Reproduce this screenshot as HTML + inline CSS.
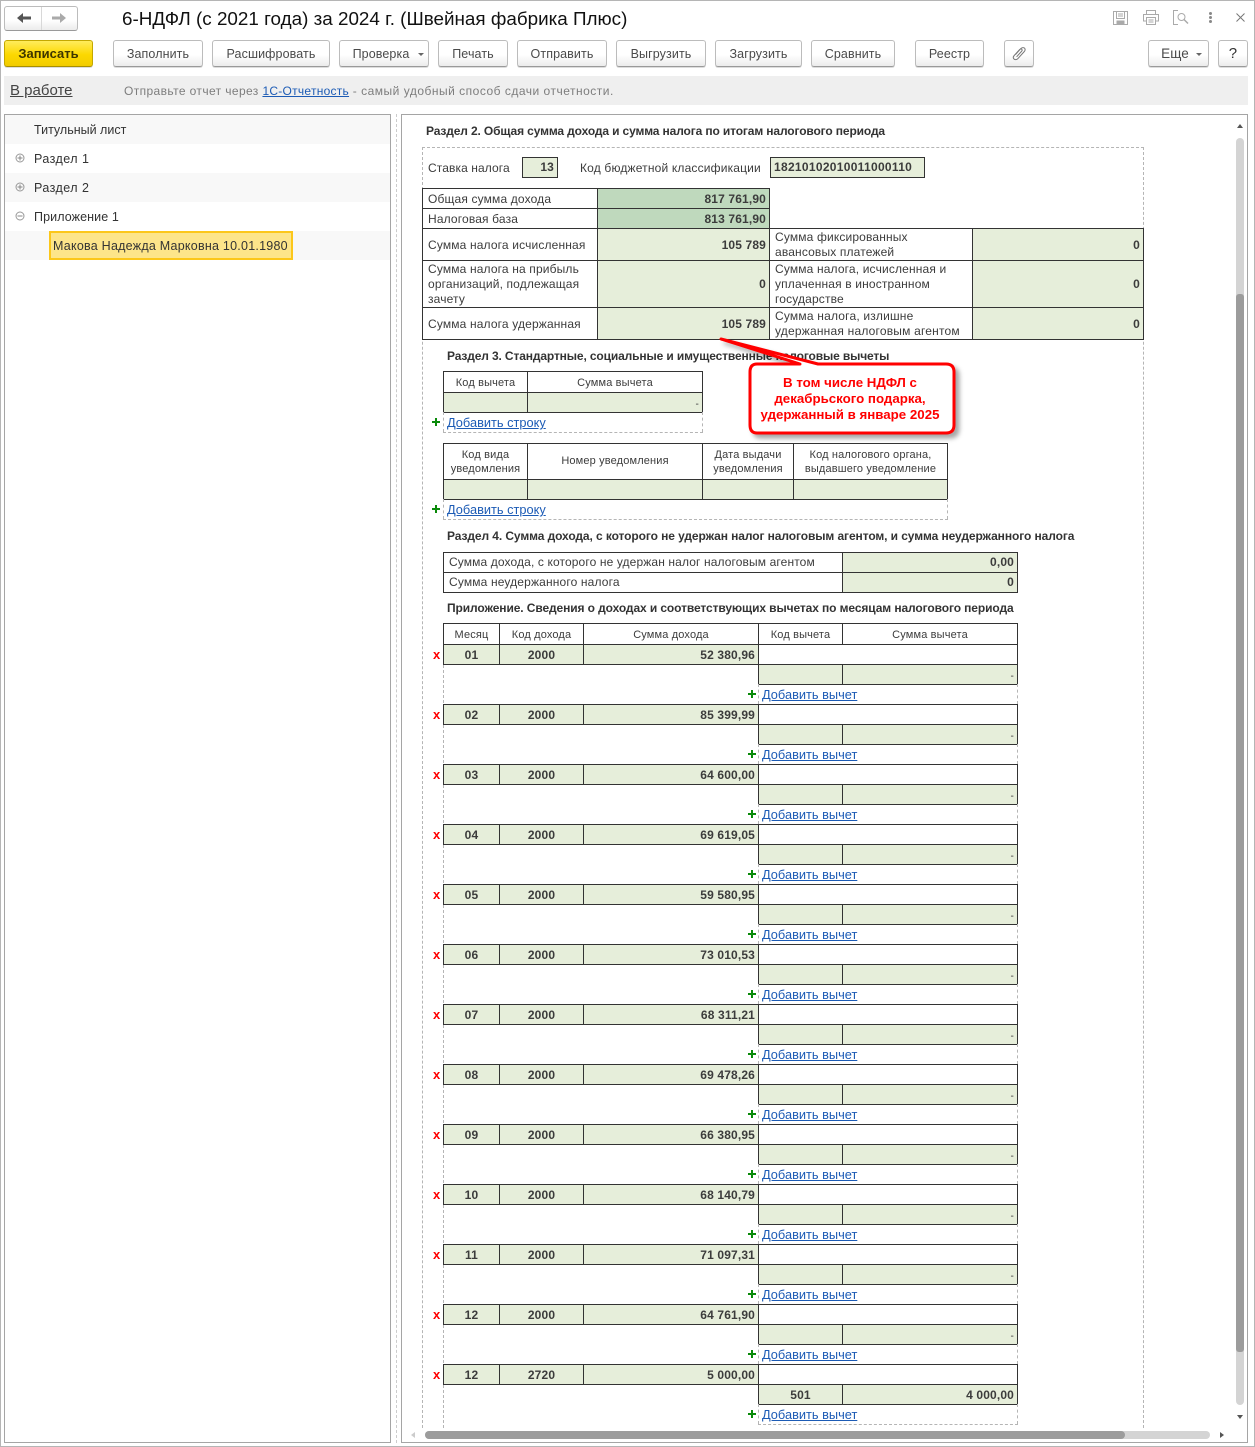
<!DOCTYPE html>
<html lang="ru"><head><meta charset="utf-8"><title>6-НДФЛ</title>
<style>
html,body{margin:0;padding:0;background:#fff}
#p{position:relative;width:1255px;height:1447px;overflow:hidden;background:#fff;font-family:"Liberation Sans",Arial,sans-serif;font-size:12px;color:#333}
#p div,#p a,#p svg{position:absolute;box-sizing:border-box}
.o{white-space:nowrap}
.bt{top:40px;height:27px;border:1px solid #bcbcbc;border-bottom-color:#9a9a9a;border-radius:3px;background:linear-gradient(#fff,#fff 55%,#ececec);text-align:center;line-height:26px;font-size:12.5px;letter-spacing:.1px;color:#4a4a4a;white-space:nowrap;box-shadow:0 1px 0 #ddd}
.t{left:5px;width:385px;height:29px;line-height:29px;padding:1px 0 0 29px;font-size:12.5px;color:#333;letter-spacing:.1px;white-space:nowrap}
.alt{background:#f8f8f8}
.h{font-weight:bold;font-size:12px;letter-spacing:-.11px;white-space:nowrap;color:#333;line-height:14px}
.c{border:1px solid #333;background:#fff;line-height:13.5px;font-size:12px;letter-spacing:.15px;color:#3c3c3c;padding:2px 5px 0;display:flex;align-items:center;white-space:nowrap}
.g{background:#e6eeda}
.d{background:#bfd9bd}
.b{font-weight:bold}
.r{justify-content:flex-end;padding:2px 3px 0 0}
.ct{justify-content:center;text-align:center;padding:0;font-size:11px}
.s{padding-top:4px}
.ml{padding-top:0;line-height:15px}
.up{padding-top:1px}
.n{font-size:12px;justify-content:center;padding:2px 0 0;font-weight:bold}
.l{color:#1c5bb5;text-decoration:underline;font-size:12.8px;line-height:14px;white-space:nowrap}
.v{width:0;border-left:1px dashed #b5b5b5}
.hz{height:0;border-top:1px dashed #b5b5b5}
.pl{width:8px;height:8px;background:linear-gradient(#0a8a0a,#0a8a0a) center/8px 2px no-repeat,linear-gradient(#0a8a0a,#0a8a0a) center/2px 8px no-repeat}
.x{left:433px;color:#f00;font-weight:bold;font-size:13px;line-height:14px}
.m{left:0;width:0;height:0}
.k1{left:443px;top:0;width:57px;height:21px}
.k2{left:499px;top:0;width:85px;height:21px}
.k3{left:583px;top:0;width:176px;height:21px}
.k4{left:758px;top:0;width:260px;height:21px}
.k5{left:758px;top:20px;width:85px;height:21px}
.k6{left:842px;top:20px;width:176px;height:21px}
.ds{font-size:10px;padding-top:5px}
.m .x{top:4px}
.m .pl{left:748px;top:46px}
.m .l{left:762px;top:44px}
.m .v1{left:758px;top:40px;height:20px}
.m .v2{left:1017px;top:40px;height:20px}
</style></head><body><div id="p">
<div style="left:0;top:0;width:1255px;height:1447px;border:1px solid #b5b5b5"></div>

<div style="left:4px;top:6px;width:74px;height:25px;border:1px solid #bcbcbc;border-bottom-color:#9a9a9a;border-radius:3px;background:linear-gradient(#fff,#fff 55%,#ececec)"></div>
<div style="left:41px;top:7px;width:1px;height:23px;background:#d8d8d8"></div>
<svg style="left:16px;top:12px" width="16" height="12" viewBox="0 0 16 12"><path d="M1 6 L7 1 V4.5 H15 V7.5 H7 V11 Z" fill="#555"/></svg>
<svg style="left:51px;top:12px" width="16" height="12" viewBox="0 0 16 12"><path d="M15 6 L9 1 V4.5 H1 V7.5 H9 V11 Z" fill="#aaa"/></svg>
<div class="o" style="left:122px;top:8px;font-size:18.85px;line-height:21px;color:#111">6-НДФЛ (с 2021 года) за 2024 г. (Швейная фабрика Плюс)</div>

<svg style="left:1113px;top:11px" width="15" height="14" viewBox="0 0 15 14"><path d="M.5.5H14.5V13.5H.5Z M3.5.5V7.5H11.5V.5 M5 3H10 M5 5H10 M4 13.5V10H11V13.5" fill="none" stroke="#aaa"/><rect x="4" y="10" width="7" height="3.500" fill="#aaa"/></svg>
<svg style="left:1143px;top:10px" width="16" height="15" viewBox="0 0 16 15"><path d="M3.5 4V.5H12.5V4 M3.5 11H.5V4.5H15.5V11H12.5 M3.5 7.5H12.5V14.5H3.5Z M5.5 10H10.5 M5.5 12H10.5" fill="none" stroke="#aaa"/></svg>
<svg style="left:1173px;top:10px" width="16" height="15" viewBox="0 0 16 15"><path d="M5 .5H.5V14.5H5" fill="none" stroke="#aaa"/><circle cx="8.500" cy="7" r="3.500" fill="none" stroke="#aaa"/><path d="M11 9.5L15 13.5" stroke="#aaa" stroke-width="1.5"/></svg>
<div style="left:1209px;top:12px;width:3px;height:3px;background:#888;border-radius:50%"></div>
<div style="left:1209px;top:16px;width:3px;height:3px;background:#888;border-radius:50%"></div>
<div style="left:1209px;top:20px;width:3px;height:3px;background:#888;border-radius:50%"></div>
<svg style="left:1236px;top:13px" width="9" height="9" viewBox="0 0 9 9"><path d="M.5.5L8.5 8.5M8.5.5L.5 8.5" stroke="#777"/></svg>

<div class="bt b" style="left:4px;width:89px;background:linear-gradient(#ffec5c,#fcd800 55%,#f2cc00);border-color:#c4a800;border-bottom-color:#a88f00;color:#3d3500;font-size:13px;letter-spacing:0;font-weight:bold">Записать</div>
<div class="bt" style="left:113px;width:90px">Заполнить</div>
<div class="bt" style="left:212px;width:118px">Расшифровать</div>
<div class="bt" style="left:339px;width:90px;padding-right:6px">Проверка</div>
<div style="left:418px;top:53px;width:0;height:0;border:3px solid transparent;border-top:3px solid #666;border-bottom:0"></div>
<div class="bt" style="left:438px;width:70px">Печать</div>
<div class="bt" style="left:517px;width:90px">Отправить</div>
<div class="bt" style="left:616px;width:90px">Выгрузить</div>
<div class="bt" style="left:715px;width:87px">Загрузить</div>
<div class="bt" style="left:811px;width:84px">Сравнить</div>
<div class="bt" style="left:915px;width:69px">Реестр</div>
<div class="bt" style="left:1004px;width:30px"></div>
<svg style="left:1012px;top:46px" width="14" height="15" viewBox="0 0 14 15"><path d="M3.5 8.5L8.8 2.6C10 1.3 11.9 1.3 12.6 2.2C13.4 3.2 13.1 4.7 12 5.9L5.8 12.7C4.7 13.9 3 14 2 13C1 12 1.2 10.600 2.200 9.500L7.600 3.600C8.300 2.900 9.300 2.800 9.800 3.300C10.300 3.800 10.200 4.700 9.500 5.400L4.600 10.800" fill="none" stroke="#777"/></svg>
<div class="bt" style="left:1148px;width:61px;padding-right:7px;font-size:13.500px">Еще</div>
<div style="left:1196px;top:53px;width:0;height:0;border:3px solid transparent;border-top:3px solid #666;border-bottom:0"></div>
<div class="bt" style="left:1218px;width:30px;font-size:15px;color:#333">?</div>

<div style="left:4px;top:76px;width:1244px;height:29px;background:#efefef"></div>
<div class="o" style="left:10px;top:82px;font-size:15px;line-height:17px;color:#444;text-decoration:underline">В работе</div>
<div class="o" style="left:124px;top:84px;font-size:12px;line-height:15px;color:#7d7d7d;letter-spacing:.39px">Отправьте отчет через <span style="color:#1c5bb5;text-decoration:underline;letter-spacing:.26px">1С-Отчетность</span> <span style="letter-spacing:.5px">- самый удобный способ сдачи отчетности.</span></div>

<div style="left:4px;top:114px;width:387px;height:1329px;border:1px solid #a5a5a5"></div>
<div class="t alt" style="top:115px;letter-spacing:0">Титульный лист</div>
<div class="t" style="top:144px;letter-spacing:.45px">Раздел 1</div>
<div class="t alt" style="top:173px;letter-spacing:.45px">Раздел 2</div>
<div class="t" style="top:202px">Приложение 1</div>
<div class="t alt" style="top:231px"></div>
<svg style="left:15px;top:153px" width="10" height="10" viewBox="0 0 10 10"><circle cx="5" cy="5" r="4" fill="none" stroke="#999"/><path d="M2.500 5H7.500M5 2.500V7.500" stroke="#888"/></svg>
<svg style="left:15px;top:182px" width="10" height="10" viewBox="0 0 10 10"><circle cx="5" cy="5" r="4" fill="none" stroke="#999"/><path d="M2.500 5H7.500M5 2.500V7.500" stroke="#888"/></svg>
<svg style="left:15px;top:211px" width="10" height="10" viewBox="0 0 10 10"><circle cx="5" cy="5" r="4" fill="none" stroke="#999"/><path d="M2.500 5H7.500" stroke="#888"/></svg>
<div class="o" style="left:49px;top:231px;width:244px;height:29px;background:#fde58a;border:2px solid #fcc71a;line-height:27px;padding-left:2px;font-size:12.5px;color:#333;letter-spacing:.24px">Макова Надежда Марковна 10.01.1980</div>
<div class="v" style="left:396px;top:114px;height:1329px;border-left-color:#ccc"></div>

<div style="left:401px;top:114px;width:847px;height:1329px;border:1px solid #a5a5a5"></div>
<div class="h" style="left:426px;top:124px;letter-spacing:-.13px">Раздел 2. Общая сумма дохода и сумма налога по итогам налогового периода</div>
<div class="hz" style="left:422px;top:147px;width:722px"></div>
<div class="v" style="left:422px;top:147px;height:1281px"></div>
<div class="v" style="left:1143px;top:147px;height:1281px"></div>

<div class="o" style="left:428px;top:161px;line-height:14px;color:#3c3c3c;letter-spacing:.1px">Ставка налога</div>
<div class="c g b r up" style="left:522px;top:157px;width:36px;height:21px">13</div>
<div class="o" style="left:580px;top:161px;line-height:14px;color:#3c3c3c;letter-spacing:.17px">Код бюджетной классификации</div>
<div class="c g b up" style="left:770px;top:157px;width:155px;height:21px;padding-left:3px;letter-spacing:.3px">18210102010011000110</div>

<div class="c" style="left:422px;top:188px;width:176px;height:21px">Общая сумма дохода</div>
<div class="c d b r" style="left:597px;top:188px;width:173px;height:21px">817 761,90</div>
<div class="c" style="left:422px;top:208px;width:176px;height:21px">Налоговая база</div>
<div class="c d b r" style="left:597px;top:208px;width:173px;height:21px">813 761,90</div>
<div class="c" style="left:422px;top:228px;width:176px;height:33px">Сумма налога исчисленная</div>
<div class="c g b r" style="left:597px;top:228px;width:173px;height:33px">105 789</div>
<div class="c ml" style="left:769px;top:228px;width:204px;height:33px">Сумма фиксированных<br>авансовых платежей</div>
<div class="c g b r" style="left:972px;top:228px;width:172px;height:33px">0</div>
<div class="c ml" style="left:422px;top:260px;width:176px;height:48px">Сумма налога на прибыль<br>организаций, подлежащая<br>зачету</div>
<div class="c g b r up" style="left:597px;top:260px;width:173px;height:48px">0</div>
<div class="c ml" style="left:769px;top:260px;width:204px;height:48px">Сумма налога, исчисленная и<br>уплаченная в иностранном<br>государстве</div>
<div class="c g b r up" style="left:972px;top:260px;width:172px;height:48px">0</div>
<div class="c" style="left:422px;top:307px;width:176px;height:33px">Сумма налога удержанная</div>
<div class="c g b r" style="left:597px;top:307px;width:173px;height:33px">105 789</div>
<div class="c ml" style="left:769px;top:307px;width:204px;height:33px;letter-spacing:.2px">Сумма налога, излишне<br>удержанная налоговым агентом</div>
<div class="c g b r" style="left:972px;top:307px;width:172px;height:33px">0</div>

<div class="h" style="left:447px;top:349px;letter-spacing:-.13px">Раздел 3. Стандартные, социальные и имущественные налоговые вычеты</div>
<div class="c ct s" style="left:443px;top:371px;width:85px;height:22px">Код вычета</div>
<div class="c ct s" style="left:527px;top:371px;width:176px;height:22px">Сумма вычета</div>
<div class="c g" style="left:443px;top:392px;width:85px;height:21px"></div>
<div class="c g r ds" style="left:527px;top:392px;width:176px;height:21px">-</div>
<div class="v" style="left:443px;top:412px;height:20px"></div>
<div class="v" style="left:702px;top:412px;height:20px"></div>
<div class="hz" style="left:443px;top:432px;width:260px"></div>
<div class="pl" style="left:432px;top:418px"></div>
<div class="l" style="left:447px;top:416px">Добавить строку</div>

<div class="c ct" style="left:443px;top:443px;width:85px;height:37px;line-height:14px">Код вида<br>уведомления</div>
<div class="c ct" style="left:527px;top:443px;width:176px;height:37px;padding-top:1px">Номер уведомления</div>
<div class="c ct" style="left:702px;top:443px;width:92px;height:37px;line-height:14px">Дата выдачи<br>уведомления</div>
<div class="c ct" style="left:793px;top:443px;width:155px;height:37px;line-height:14px">Код налогового органа,<br>выдавшего уведомление</div>
<div class="c g" style="left:443px;top:479px;width:85px;height:21px"></div>
<div class="c g" style="left:527px;top:479px;width:176px;height:21px"></div>
<div class="c g" style="left:702px;top:479px;width:92px;height:21px"></div>
<div class="c g" style="left:793px;top:479px;width:155px;height:21px"></div>
<div class="v" style="left:443px;top:499px;height:20px"></div>
<div class="v" style="left:947px;top:499px;height:20px"></div>
<div class="hz" style="left:443px;top:519px;width:505px"></div>
<div class="pl" style="left:432px;top:505px"></div>
<div class="l" style="left:447px;top:503px">Добавить строку</div>

<div class="h" style="left:447px;top:529px;letter-spacing:-.09px">Раздел 4. Сумма дохода, с которого не удержан налог налоговым агентом, и сумма неудержанного налога</div>
<div class="c up" style="left:443px;top:552px;width:400px;height:21px;letter-spacing:.12px">Сумма дохода, с которого не удержан налог налоговым агентом</div>
<div class="c g b r up" style="left:842px;top:552px;width:176px;height:21px">0,00</div>
<div class="c up" style="left:443px;top:572px;width:400px;height:21px">Сумма неудержанного налога</div>
<div class="c g b r up" style="left:842px;top:572px;width:176px;height:21px">0</div>

<div class="h" style="left:447px;top:601px;letter-spacing:-.1px">Приложение. Сведения о доходах и соответствующих вычетах по месяцам налогового периода</div>
<div class="c ct s" style="left:443px;top:623px;width:57px;height:22px">Месяц</div>
<div class="c ct s" style="left:499px;top:623px;width:85px;height:22px">Код дохода</div>
<div class="c ct s" style="left:583px;top:623px;width:176px;height:22px">Сумма дохода</div>
<div class="c ct s" style="left:758px;top:623px;width:85px;height:22px">Код вычета</div>
<div class="c ct s" style="left:842px;top:623px;width:176px;height:22px">Сумма вычета</div>
<div class="v" style="left:443px;top:645px;height:783px"></div>

<div class="m" style="top:644px"><div class="x">x</div><div class="c g n k1">01</div><div class="c g n k2">2000</div><div class="c g b r k3">52 380,96</div><div class="c k4"></div><div class="c g k5"></div><div class="c g r ds k6">-</div><div class="v v1"></div><div class="v v2"></div><div class="pl"></div><div class="l">Добавить вычет</div></div>
<div class="m" style="top:704px"><div class="x">x</div><div class="c g n k1">02</div><div class="c g n k2">2000</div><div class="c g b r k3">85 399,99</div><div class="c k4"></div><div class="c g k5"></div><div class="c g r ds k6">-</div><div class="v v1"></div><div class="v v2"></div><div class="pl"></div><div class="l">Добавить вычет</div></div>
<div class="m" style="top:764px"><div class="x">x</div><div class="c g n k1">03</div><div class="c g n k2">2000</div><div class="c g b r k3">64 600,00</div><div class="c k4"></div><div class="c g k5"></div><div class="c g r ds k6">-</div><div class="v v1"></div><div class="v v2"></div><div class="pl"></div><div class="l">Добавить вычет</div></div>
<div class="m" style="top:824px"><div class="x">x</div><div class="c g n k1">04</div><div class="c g n k2">2000</div><div class="c g b r k3">69 619,05</div><div class="c k4"></div><div class="c g k5"></div><div class="c g r ds k6">-</div><div class="v v1"></div><div class="v v2"></div><div class="pl"></div><div class="l">Добавить вычет</div></div>
<div class="m" style="top:884px"><div class="x">x</div><div class="c g n k1">05</div><div class="c g n k2">2000</div><div class="c g b r k3">59 580,95</div><div class="c k4"></div><div class="c g k5"></div><div class="c g r ds k6">-</div><div class="v v1"></div><div class="v v2"></div><div class="pl"></div><div class="l">Добавить вычет</div></div>
<div class="m" style="top:944px"><div class="x">x</div><div class="c g n k1">06</div><div class="c g n k2">2000</div><div class="c g b r k3">73 010,53</div><div class="c k4"></div><div class="c g k5"></div><div class="c g r ds k6">-</div><div class="v v1"></div><div class="v v2"></div><div class="pl"></div><div class="l">Добавить вычет</div></div>
<div class="m" style="top:1004px"><div class="x">x</div><div class="c g n k1">07</div><div class="c g n k2">2000</div><div class="c g b r k3">68 311,21</div><div class="c k4"></div><div class="c g k5"></div><div class="c g r ds k6">-</div><div class="v v1"></div><div class="v v2"></div><div class="pl"></div><div class="l">Добавить вычет</div></div>
<div class="m" style="top:1064px"><div class="x">x</div><div class="c g n k1">08</div><div class="c g n k2">2000</div><div class="c g b r k3">69 478,26</div><div class="c k4"></div><div class="c g k5"></div><div class="c g r ds k6">-</div><div class="v v1"></div><div class="v v2"></div><div class="pl"></div><div class="l">Добавить вычет</div></div>
<div class="m" style="top:1124px"><div class="x">x</div><div class="c g n k1">09</div><div class="c g n k2">2000</div><div class="c g b r k3">66 380,95</div><div class="c k4"></div><div class="c g k5"></div><div class="c g r ds k6">-</div><div class="v v1"></div><div class="v v2"></div><div class="pl"></div><div class="l">Добавить вычет</div></div>
<div class="m" style="top:1184px"><div class="x">x</div><div class="c g n k1">10</div><div class="c g n k2">2000</div><div class="c g b r k3">68 140,79</div><div class="c k4"></div><div class="c g k5"></div><div class="c g r ds k6">-</div><div class="v v1"></div><div class="v v2"></div><div class="pl"></div><div class="l">Добавить вычет</div></div>
<div class="m" style="top:1244px"><div class="x">x</div><div class="c g n k1">11</div><div class="c g n k2">2000</div><div class="c g b r k3">71 097,31</div><div class="c k4"></div><div class="c g k5"></div><div class="c g r ds k6">-</div><div class="v v1"></div><div class="v v2"></div><div class="pl"></div><div class="l">Добавить вычет</div></div>
<div class="m" style="top:1304px"><div class="x">x</div><div class="c g n k1">12</div><div class="c g n k2">2000</div><div class="c g b r k3">64 761,90</div><div class="c k4"></div><div class="c g k5"></div><div class="c g r ds k6">-</div><div class="v v1"></div><div class="v v2"></div><div class="pl"></div><div class="l">Добавить вычет</div></div>
<div class="m" style="top:1364px"><div class="x">x</div><div class="c g n k1">12</div><div class="c g n k2">2720</div><div class="c g b r k3">5 000,00</div><div class="c k4"></div><div class="c g n k5">501</div><div class="c g b r k6">4 000,00</div><div class="v v1"></div><div class="v v2"></div><div class="pl"></div><div class="l">Добавить вычет</div></div>
<div class="hz" style="left:758px;top:1424px;width:260px"></div>

<svg style="left:716px;top:335px" width="250" height="110" viewBox="0 0 250 110">
<defs><filter id="s" x="-10%" y="-10%" width="125%" height="125%"><feDropShadow dx="4" dy="4" stdDeviation="2.500" flood-color="#000" flood-opacity=".35"/></filter></defs>
<path d="M41 29H84L5 4 L102 29 H230 Q238 29 238 37 V90 Q238 98 230 98 H41 Q34 98 34 90 V37 Q34 29 41 29Z" fill="#fff" stroke="#f00" stroke-width="3" stroke-linejoin="round" filter="url(#s)"/>
</svg>
<div class="o" style="left:748px;top:375px;width:204px;text-align:center;color:#f00;font-weight:bold;font-size:13.3px;line-height:16px">В том числе НДФЛ с<br>декабрьского подарка,<br>удержанный в январе 2025</div>

<div style="left:1236px;top:138px;width:8px;height:1267px;background:#d4d4d4;border-radius:4px"></div>
<div style="left:1236px;top:294px;width:8px;height:1058px;background:#9c9c9c;border-radius:3px"></div>
<div style="left:1237px;top:124px;width:0;height:0;border:3px solid transparent;border-bottom:4px solid #555;border-top:0"></div>
<div style="left:1237px;top:1415px;width:0;height:0;border:3px solid transparent;border-top:4px solid #555;border-bottom:0"></div>
<div style="left:425px;top:1431px;width:785px;height:8px;background:#d4d4d4;border-radius:4px"></div>
<div style="left:425px;top:1431px;width:700px;height:8px;background:#9c9c9c;border-radius:4px"></div>
<div style="left:411px;top:1432px;width:0;height:0;border:3px solid transparent;border-right:4px solid #ccc;border-left:0"></div>
<div style="left:1220px;top:1432px;width:0;height:0;border:3px solid transparent;border-left:4px solid #555;border-right:0"></div>
</div></body></html>
